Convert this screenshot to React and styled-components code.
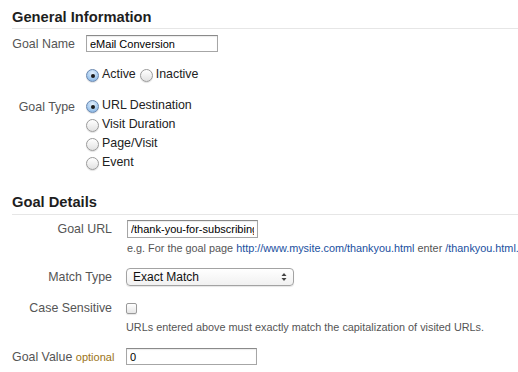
import React from 'react';
import styled, { createGlobalStyle } from 'styled-components';

const GlobalStyle = createGlobalStyle`
    html, body {
        margin: 0;
        padding: 0;
        background: #ffffff;
    }
    body {
        font-family: "Liberation Sans", Arial, Helvetica, sans-serif;
        font-size: 12.4px;
        color: #555;
    }
`

const Page = styled.div`
    width: 518px;
    height: 372px;
    padding-left: 12px;
    box-sizing: border-box;
    overflow: hidden;
`

const Heading = styled.h2`
    margin: ${p => p.top}px 0 0 0;
    padding: 0 0 ${p => p.bottom}px 0;
    height: 18px;
    line-height: 18px;
    font-size: 14.7px;
    font-weight: bold;
    color: #1e1e1e;
    border-bottom: 1px solid #e6e6e6;
`

const Row = styled.div`
    display: flex;
    align-items: ${p => (p.top ? 'flex-start' : 'center')};
    gap: ${p => p.gap}px;
    margin-top: ${p => p.mt}px;
`

const Label = styled.label`
    width: ${p => p.width}px;
    flex: none;
    text-align: right;
    color: #555;
    font-size: 12.4px;
    line-height: 16px;
    white-space: nowrap;
    padding-top: ${p => p.pt || 0}px;
`

const Optional = styled.span`
    color: #9b7416;
    font-size: 11px;
`

const Spacer = styled.div`
    width: ${p => p.width}px;
    flex: none;
`

const TextInput = styled.input`
    width: ${p => p.width}px;
    height: ${p => p.height}px;
    box-sizing: border-box;
    margin: 0;
    padding: 0 3px;
    border: 1px solid #a6a6a6;
    border-top-color: #8a8a8a;
    box-shadow: inset 0 1px 1px rgba(0, 0, 0, 0.08);
    font-family: "Liberation Sans", Arial, sans-serif;
    font-size: 11px;
    color: #000;
    background: #fff;
    outline: none;
`

const RadioGroup = styled.div`
    display: flex;
    flex-direction: ${p => (p.inline ? 'row' : 'column')};
    gap: ${p => p.gap || 0}px;
`

const RadioLine = styled.div`
    display: flex;
    align-items: flex-start;
    height: ${p => p.h || 19}px;
    line-height: ${p => p.h || 19}px;
    color: #222;
`

const RadioDot = styled.span`
    flex: none;
    position: relative;
    width: 13px;
    height: 13px;
    margin-top: ${p => p.mt}px;
    margin-right: 3px;
    border-radius: 50%;
    box-sizing: border-box;
    border: 1px solid ${p => (p.checked ? '#6a88b0' : '#9a9a9a')};
    background: ${p =>
        p.checked
            ? 'radial-gradient(circle at 50% 30%, #e4f0fc 0%, #a9ccef 55%, #79a9dc 100%)'
            : 'linear-gradient(#ffffff, #e2e2e2)'};
    box-shadow: 0 1px 1px rgba(0, 0, 0, 0.12);

    &::after {
        content: '';
        display: ${p => (p.checked ? 'block' : 'none')};
        position: absolute;
        left: 3.5px;
        top: 3.5px;
        width: 4px;
        height: 4px;
        border-radius: 50%;
        background: #1a1a1a;
    }
`

const Help = styled.div`
    margin-top: ${p => p.mt}px;
    margin-left: ${p => p.ml}px;
    font-size: 10.85px;
    line-height: 14px;
    color: #555;
    white-space: nowrap;
`

const Link = styled.a`
    color: #2150a0;
    text-decoration: none;
`

const Select = styled.div`
    width: 168px;
    height: 18px;
    box-sizing: border-box;
    display: flex;
    align-items: center;
    justify-content: space-between;
    padding: 0 6px 0 6px;
    border: 1px solid #a3a3a3;
    border-radius: 4px;
    background: linear-gradient(#ffffff, #f1f1f1);
    box-shadow: 0 1px 1px rgba(0, 0, 0, 0.1);
    font-size: 12px;
    color: #111;
`

const Arrows = styled.svg`
    flex: none;
`

const Checkbox = styled.span`
    width: 11px;
    height: 11px;
    box-sizing: border-box;
    border: 1px solid #9a9a9a;
    border-radius: 2px;
    background: linear-gradient(#ffffff, #e6e6e6);
    box-shadow: 0 1px 1px rgba(0, 0, 0, 0.1);
`

const App = () => {
    return (
        <>
            <GlobalStyle />
            <Page>
                <Heading top={8} bottom={2}>General Information</Heading>

                <Row mt={6} gap={11}>
                    <Label width={63}>Goal Name</Label>
                    <TextInput width={132} height={17} defaultValue="eMail Conversion" readOnly />
                </Row>

                <Row mt={14} gap={11}>
                    <Spacer width={63} />
                    <RadioGroup inline gap={4}>
                        <RadioLine h={16}>
                            <RadioDot checked mt={3} />Active
                        </RadioLine>
                        <RadioLine h={16}>
                            <RadioDot mt={3} />Inactive
                        </RadioLine>
                    </RadioGroup>
                </Row>

                <Row mt={14} gap={11} top>
                    <Label width={63} pt={3}>Goal Type</Label>
                    <RadioGroup>
                        <RadioLine><RadioDot checked mt={4} />URL Destination</RadioLine>
                        <RadioLine><RadioDot mt={4} />Visit Duration</RadioLine>
                        <RadioLine><RadioDot mt={4} />Page/Visit</RadioLine>
                        <RadioLine><RadioDot mt={4} />Event</RadioLine>
                    </RadioGroup>
                </Row>

                <Heading top={21} bottom={3}>Goal Details</Heading>

                <Row mt={5} gap={15}>
                    <Label width={100}>Goal URL</Label>
                    <TextInput width={131} height={18} defaultValue="/thank-you-for-subscribing" readOnly />
                </Row>
                <Help mt={3} ml={115}>
                    e.g. For the goal page <Link>http://www.mysite.com/thankyou.html</Link> enter <Link>/thankyou.html.</Link>
                </Help>

                <Row mt={13} gap={14}>
                    <Label width={100}>Match Type</Label>
                    <Select>
                        Exact Match
                        <Arrows width="6" height="10" viewBox="0 0 6 10">
                            <path d="M0.5 4 L3 1 L5.5 4 Z" fill="#444" />
                            <path d="M0.5 6 L3 9 L5.5 6 Z" fill="#444" />
                        </Arrows>
                    </Select>
                </Row>

                <Row mt={14} gap={14}>
                    <Label width={100}>Case Sensitive</Label>
                    <Checkbox />
                </Row>
                <Help mt={4} ml={114}>
                    URLs entered above must exactly match the capitalization of visited URLs.
                </Help>

                <Row mt={14} gap={13}>
                    <Label width={101}>Goal Value <Optional>optional</Optional></Label>
                    <TextInput width={131} height={17} defaultValue="0" readOnly />
                </Row>
            </Page>
        </>
    );
};

export default App;
